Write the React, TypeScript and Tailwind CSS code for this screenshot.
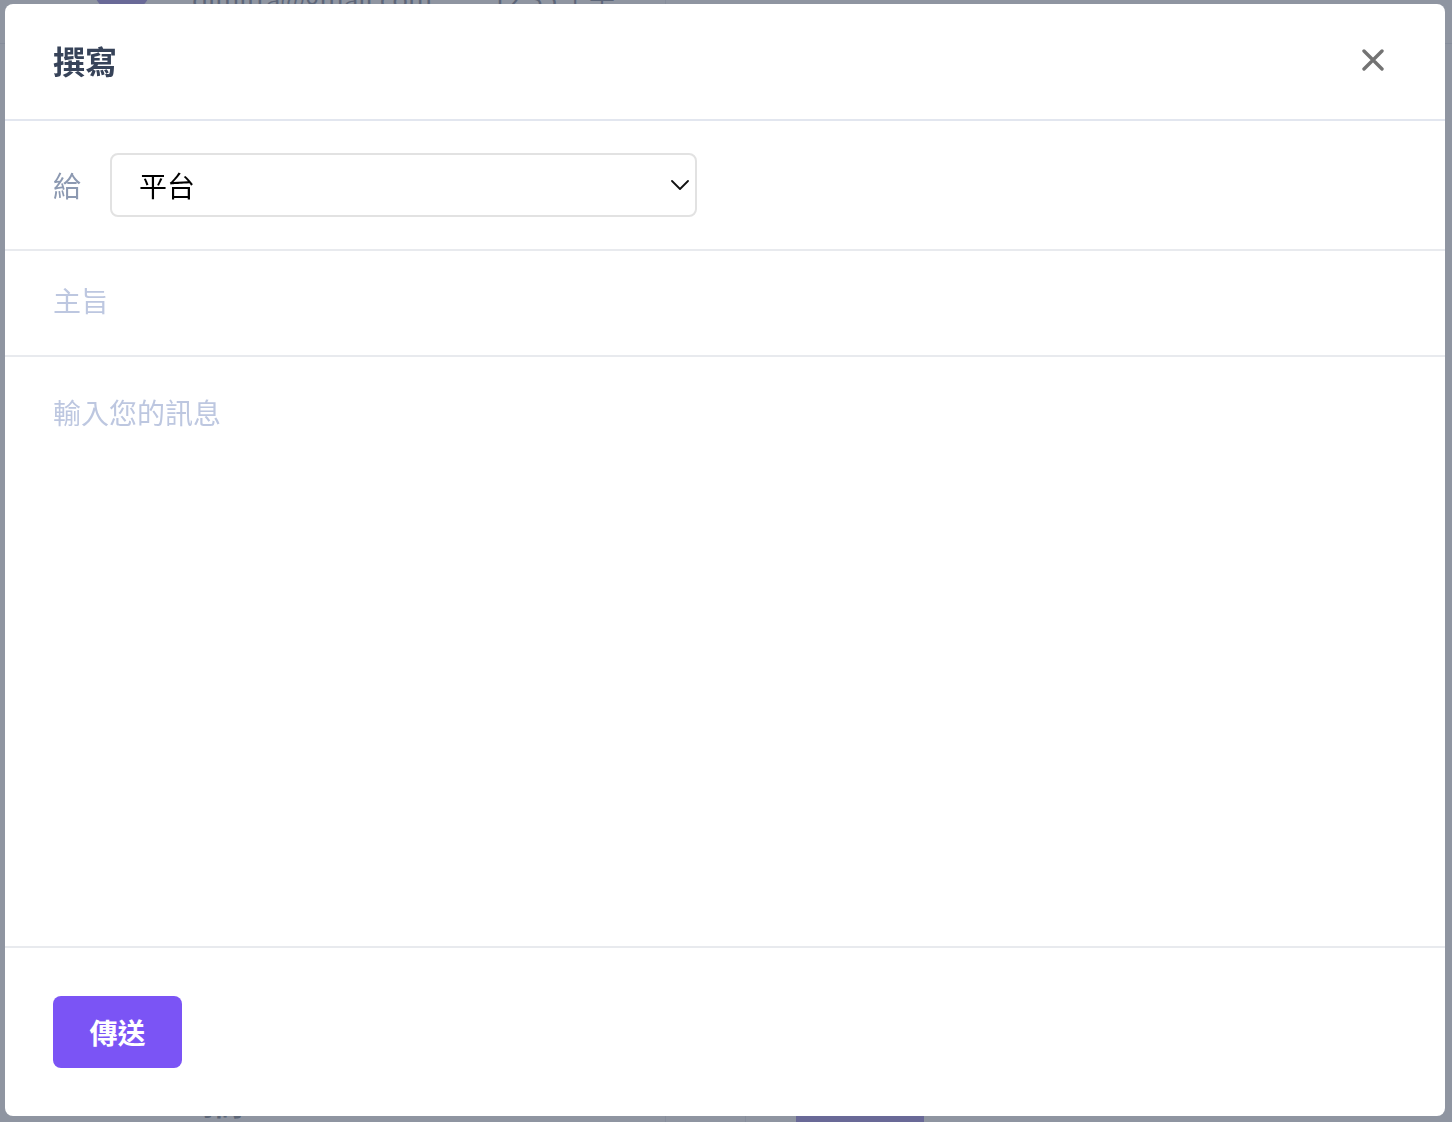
import { useState } from "react";

const font = { fontFamily: '"Noto Sans CJK TC", "Noto Sans", sans-serif' };

function BackgroundPage() {
    return (
        <div className="h-screen flex flex-col bg-white overflow-hidden" style={font}>
            <div className="flex h-[44px] border-b border-[#d9dde6]">
                <div className="flex w-[666px] items-start gap-[40px] border-r border-[#d9dde6] pl-[92px]">
                    <div className="-mt-[46px] h-[60px] w-[60px] shrink-0 rounded-full bg-[#6a4fd6]" />
                    <span className="-mt-[22px] text-[26px] text-[#3a4660]">dimitra@gmail.com</span>
                    <span className="-mt-[22px] ml-auto mr-[50px] text-[26px] text-[#3a4660]">12:35 上午</span>
                </div>
                <div className="flex-1" />
            </div>
            <div className="mt-auto flex h-[40px]">
                <div className="flex w-[666px] items-start border-r border-[#d9dde6] pl-[187px]">
                    <span className="mt-[2px] text-[28px] font-bold leading-[40px] text-[#334155]">時間</span>
                </div>
                <div className="w-[80px] border-r border-[#d9dde6]" />
                <div className="pl-[50px]">
                    <div className="mt-[16px] h-[40px] w-[128px] rounded-md bg-[#6a4fd6]" />
                </div>
            </div>
        </div>
    );
}

export default function App() {
    const [to, setTo] = useState("平台");
    const [subject, setSubject] = useState("");
    const [body, setBody] = useState("");

    return (
        <div className="relative">
            <BackgroundPage />
            <div className="fixed inset-0 flex bg-gray-500/75 pt-[4px] pl-[5px] pr-[7px] pb-[6px]" style={font}>
                <div className="flex flex-1 flex-col overflow-hidden rounded-lg bg-white">
                    <div className="flex h-[117px] shrink-0 items-center justify-between border-b-2 border-[#e2e6ef] pb-[4px] pl-[48px] pr-[61px]">
                        <h1 className="text-[32px] font-bold text-[#374359]">撰寫</h1>
                        <button type="button" className="flex h-[22px] w-[22px] items-center justify-center">
                            <svg width="22" height="22" viewBox="0 0 22 22" fill="none" stroke="#737373" strokeWidth="3.4" strokeLinecap="round">
                                <path d="M2 2L20 20M20 2L2 20" />
                            </svg>
                        </button>
                    </div>

                    <div className="flex h-[130px] shrink-0 items-center gap-[29px] border-b-2 border-[#e8eaee] pl-[48px]">
                        <label className="text-[28px] text-[#8c99b1]">給</label>
                        <div className="flex h-[64px] w-[587px] items-center justify-between rounded-lg border-2 border-[#e2e2e2] pl-[27px] pr-[5px]">
                            <span className="text-[28px] text-black">{to}</span>
                            <button type="button" onClick={() => setTo("平台")} className="flex h-[20px] w-[20px] items-center justify-center">
                                <svg width="18" height="10" viewBox="0 0 18 10" fill="none" stroke="#111" strokeWidth="1.8" strokeLinecap="round" strokeLinejoin="round">
                                    <path d="M1 1l8 8 8-8" />
                                </svg>
                            </button>
                        </div>
                    </div>

                    <div className="flex h-[106px] shrink-0 items-center border-b-2 border-[#e8eaee] px-[48px] pb-[6px]">
                        <input
                            value={subject}
                            onChange={e => setSubject(e.target.value)}
                            placeholder="主旨"
                            className="w-full text-[28px] text-[#334155] outline-none placeholder:text-[#bdc7e0]"
                        />
                    </div>

                    <div className="flex-1 border-b-2 border-[#e8eaee] px-[48px] pt-[32px]">
                        <textarea
                            value={body}
                            onChange={e => setBody(e.target.value)}
                            placeholder="輸入您的訊息"
                            className="h-full w-full resize-none text-[28px] leading-[46px] text-[#334155] outline-none placeholder:text-[#bdc7e0]"
                        />
                    </div>

                    <div className="flex h-[168px] shrink-0 items-start px-[48px] pt-[48px]">
                        <button type="button" className="flex h-[72px] w-[129px] items-center justify-center rounded-lg bg-[#7b54f5] text-[28px] font-bold text-white">
                            傳送
                        </button>
                    </div>
                </div>
            </div>
        </div>
    );
}
